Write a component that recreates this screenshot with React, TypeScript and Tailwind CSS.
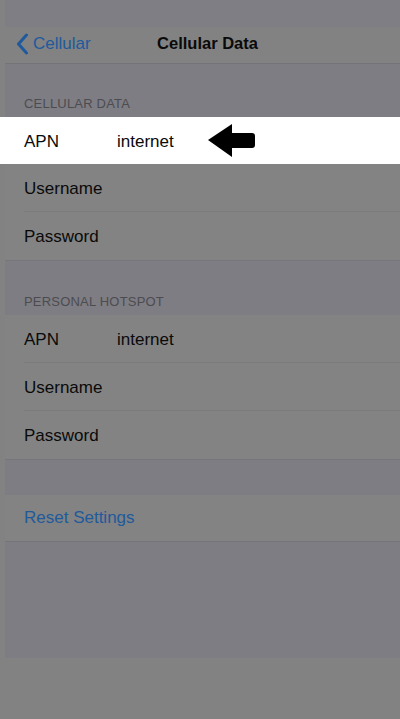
import React from 'react';

const font = { fontFamily: '"Liberation Sans", Arial, sans-serif' };

function Row({ label, value, last }: { label: string; value?: string; last?: boolean }) {
  return (
    <div className="h-[48px] ml-[5px] pl-[19px] bg-[#838383] flex">
      <div
        className={
          'flex-1 flex items-center pt-[3px] text-[17px] text-[#0a0a0a] border-b ' +
          (last ? 'border-transparent' : 'border-[#7b7b7c]')
        }
      >
        <span className="w-[93px]">{label}</span>
        {value && <span>{value}</span>}
      </div>
    </div>
  );
}

function Header({ text, height }: { text: string; height: string }) {
  return (
    <div
      className={`${height} ml-[5px] pl-[19px] pb-[4px] bg-[#7e7d83] flex items-end text-[13px] tracking-[0.2px] text-[#4c4c50] border-t border-[#76767a]`}
    >
      {text}
    </div>
  );
}

export default function App() {
  return (
    <div className="w-[400px] h-[719px] bg-[#828282] flex flex-col overflow-hidden" style={font}>
      <div className="h-[27px] ml-[5px] bg-[#7f7e84]" />
      <div className="h-[37px] ml-[5px] pb-[3px] bg-[#828283] border-b border-[#747478] relative flex items-center justify-center">
        <div className="absolute left-[11px] top-0 bottom-[3px] flex items-center text-[#1e5a9c] text-[17px]">
          <svg width="13" height="22" viewBox="0 0 13 22" className="mr-[4px]">
            <path d="M10.5 2 L2.5 11 L10.5 20" fill="none" stroke="#1e5a9c" strokeWidth="3" strokeLinecap="round" strokeLinejoin="round" />
          </svg>
          Cellular
        </div>
        <span className="text-[16.5px] font-bold text-[#0a0a0a] ml-[10px]">Cellular Data</span>
      </div>
      <div className="h-[53px] ml-[5px] pl-[19px] pb-[4px] bg-[#7e7d83] flex items-end text-[13px] tracking-[0.2px] text-[#4c4c50]">
        CELLULAR DATA
      </div>
      <div className="h-[47px] bg-white pl-[24px] pt-[3px] flex items-center text-[17px] text-[#0a0a0a]">
        <span className="w-[93px]">APN</span>
        <span>internet</span>
        <svg width="48" height="34" viewBox="0 0 48 34" className="ml-[34px] -mt-[2px]">
          <path d="M0 16 L24 0 L24 9 L44 9 Q47 9 47 12 L47 21 Q47 24 44 24 L24 24 L24 33 Z" fill="#000" />
        </svg>
      </div>
      <Row label="Username" />
      <Row label="Password" last />
      <Header text="PERSONAL HOTSPOT" height="h-[55px]" />
      <Row label="APN" value="internet" />
      <Row label="Username" />
      <Row label="Password" last />
      <div className="h-[36px] ml-[5px] bg-[#7e7d83] border-t border-[#76767a]" />
      <div className="h-[46px] ml-[5px] pl-[19px] bg-[#838383] flex items-center text-[17px] text-[#1e5a9c]">
        Reset Settings
      </div>
      <div className="h-[117px] ml-[5px] bg-[#7e7d83] border-t border-[#76767a]" />
    </div>
  );
}
